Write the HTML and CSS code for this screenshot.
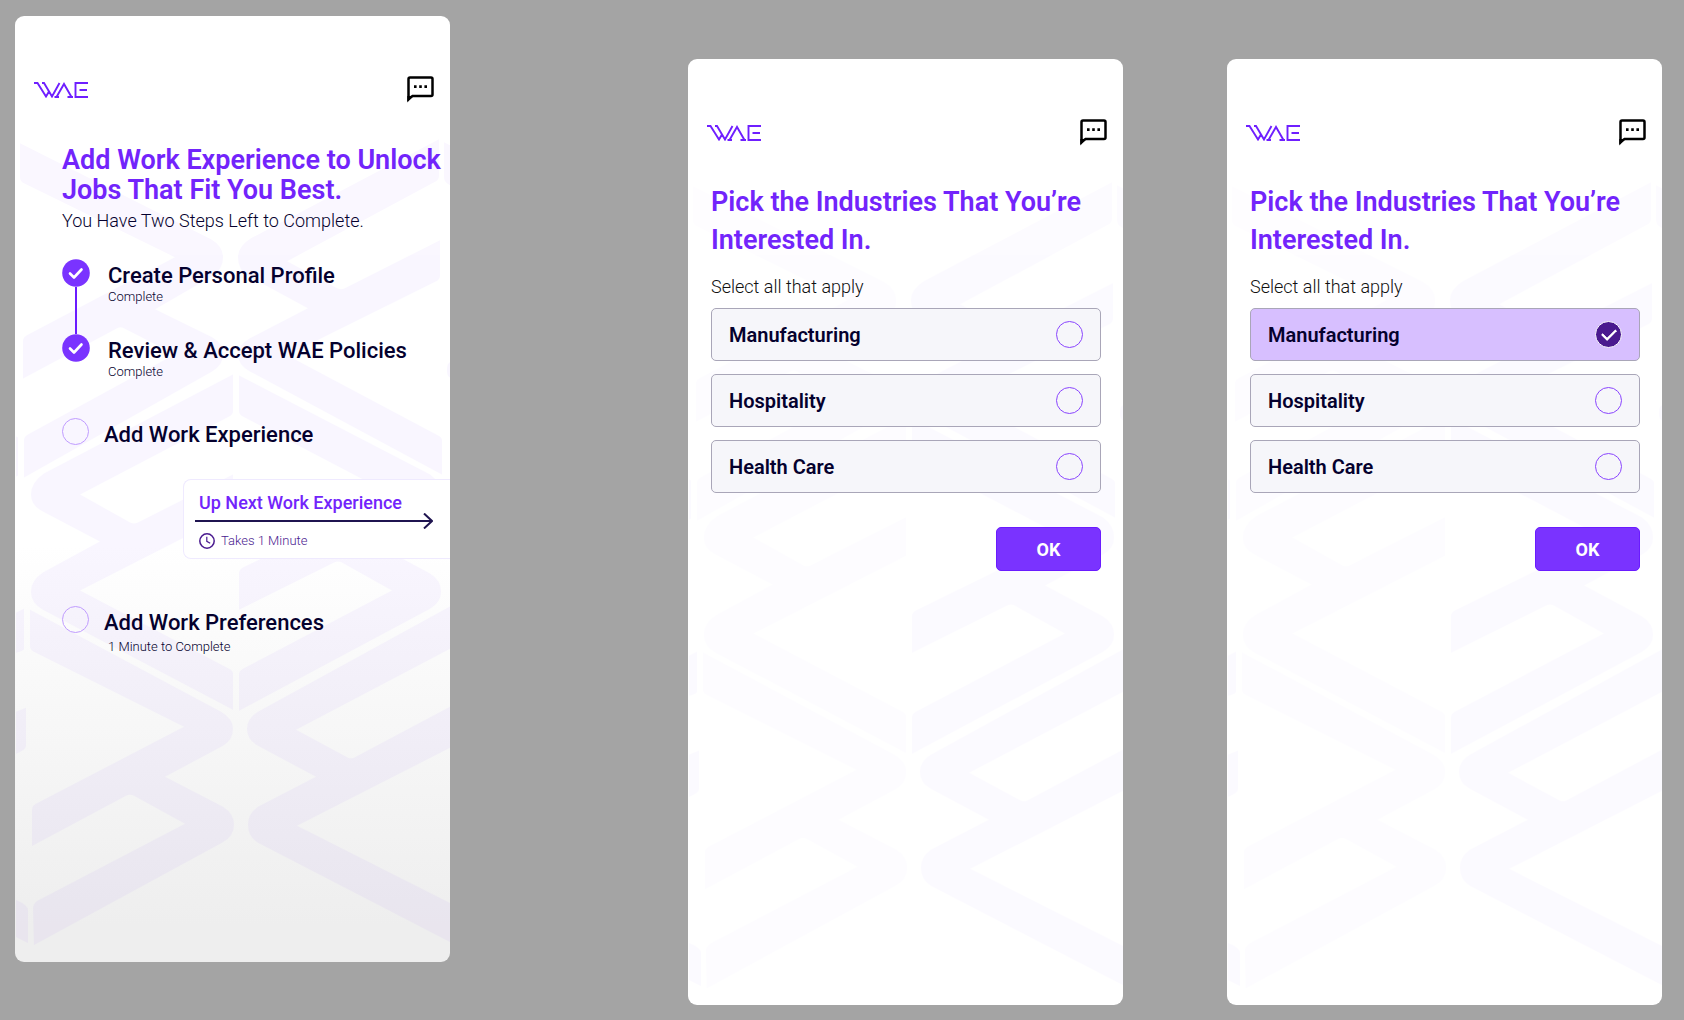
FILE: index.html
```html
<!DOCTYPE html>
<html lang="en">
<head>
    <meta charset="UTF-8">
    <meta name="viewport" content="width=device-width, initial-scale=1.0">
    <title>WAE Onboarding</title>
    <link rel="stylesheet" href="styles.css">
</head>
<body>

    <!-- Shared drawings -->
    <svg class="sprite" aria-hidden="true">
        <symbol id="logo" viewBox="0 0 54 16">
            <path d="M0 1H3.500L12 14.500L15 9.500M8 1H10L18 14.500L25.500 1M20.500 15H25M22.500 15L30 2L37.500 15M33.500 15H39M54 1H41.500V15H54M45.500 8H53" fill="none" stroke="#6f1fff" stroke-width="1.900"/>
        </symbol>
        <symbol id="chat" viewBox="0 0 27 27">
            <path d="M1.500 23V3Q1.500 1.500 3 1.500H24Q25.500 1.500 25.500 3V18.500Q25.500 20 24 20H5.500Z" fill="none" stroke="#000" stroke-width="2.500"/>
            <path d="M0.300 20V26.500L6.500 20Z" fill="#000"/>
            <path d="M7 9.300h2.600v2.600h-2.600zM12.200 9.300h2.600v2.600h-2.600zM17.400 9.300h2.600v2.600h-2.600z" fill="#000"/>
        </symbol>
        <symbol id="check" viewBox="0 0 28 28">
            <circle cx="14" cy="14" r="13.800" fill="#7a33ff"/>
            <path d="M8 14.500L12 18.500L19.500 10.500" fill="none" stroke="#fff" stroke-width="2.600" stroke-linecap="round" stroke-linejoin="round"/>
        </symbol>
        <symbol id="pattern" viewBox="15 16 435 945" preserveAspectRatio="none">
            <g class="pattern-left">
                <path d="M20 143L211 239Q223 246 223 257Q223 269 212 276L155 309L212 337Q223 343 223 354Q223 365 212 371L24 477V440Q24 436 28 434L175 354L124 328Q121 326 117 328L23 378V341Q23 337 27 335L175 257L24 183Q20 181 20 177Z"/>
                <path d="M233 374L44 473Q31 482 31 494Q31 505 43 511L100 541L43 572Q31 580 31 591Q31 603 43 609L233 709V673Q233 670 229 668L80 590L233 512V474L138 522Q134 524 130 522L80 494L229 416Q233 414 233 410Z"/>
                <path d="M30 609L221 711Q233 718 233 728Q233 739 223 745L165 776L223 806Q234 813 234 824Q234 836 222 842L34 944L33 908Q33 903 37 900L185 823L134 795Q130 793 126 795L32 845V809Q32 805 36 803L184 726L34 651Q30 649 30 645Z"/>
            </g>
            <g class="pattern-right">
                <path d="M439 139L251 238Q238 246 238 257Q238 270 249 276L308 308L250 338Q238 345 238 354Q238 365 250 371L442 474V440Q442 437 438 435L287 355L436 281Q440 279 440 275V240L345 288Q341 290 337 288L287 261L436 181Q439 179 439 175Z"/>
                <path d="M239 375V410Q239 414 243 416L392 494L243 567Q239 569 239 573V609L334 562Q338 560 342 562L392 590L243 668Q239 670 239 674V710L430 608Q441 602 441 591Q441 580 430 573L372 542L430 511Q441 505 441 494Q441 482 430 474Z"/>
                <path d="M450 606L258 711Q247 718 247 728Q247 739 258 745L316 776L258 806Q248 813 248 824Q248 836 258 842L450 941V902L297 825L450 747V706L354 757Q351 758 348 757L296 729L450 648Z"/>
                <path d="M444 142L450 145V185L447 183Q444 181 444 176ZM450 362Q447 363 447 370Q447 376 450 377ZM16 436L18 437V475L16 476ZM16 612L24 608V648Q24 650 16 652ZM16 711L26 707V745Q26 749 16 753ZM16 899Q28 904 28 909V942L16 936Z"/>
            </g>
        </symbol>
    </svg>

    <main class="screens">

        <!-- Progress screen -->
        <section class="screen screen-steps">
            <svg class="pattern" aria-hidden="true"><use href="#pattern"/></svg>
            <header class="top-bar">
                <svg class="logo" role="img" aria-label="WAE"><use href="#logo"/></svg>
                <button class="chat-btn" type="button" aria-label="Messages"><svg><use href="#chat"/></svg></button>
            </header>
            <div class="intro">
                <h1>Add Work Experience to Unlock Jobs That Fit You Best.</h1>
                <p>You Have Two Steps Left to Complete.</p>
            </div>
            <ol class="steps">
                <li class="step done">
                    <div class="rail">
                        <svg class="marker"><use href="#check"/></svg>
                        <span class="line"></span>
                    </div>
                    <div class="step-text">
                        <h2>Create Personal Profile</h2>
                        <p>Complete</p>
                    </div>
                </li>
                <li class="step done">
                    <div class="rail">
                        <svg class="marker"><use href="#check"/></svg>
                    </div>
                    <div class="step-text">
                        <h2>Review &amp; Accept WAE Policies</h2>
                        <p>Complete</p>
                    </div>
                </li>
                <li class="step todo">
                    <span class="ring"></span>
                    <div class="step-text">
                        <h2>Add Work Experience</h2>
                    </div>
                </li>
                <li class="next">
                    <a class="next-card" href="#work-experience">
                        <strong>Up Next Work Experience</strong>
                        <svg class="arrow" viewBox="0 0 238 16">
                            <path d="M0 8H237M229 0.500L237 8L229 15.500" fill="none" stroke="#1f1450" stroke-width="2"/>
                        </svg>
                        <span class="time">
                            <svg class="clock" viewBox="0 0 16 16">
                                <circle cx="8" cy="8" r="7.200" fill="none" stroke="#4a1a8f" stroke-width="1.500"/>
                                <path d="M7.800 3.800V8.300L11.200 10.300" fill="none" stroke="#4a1a8f" stroke-width="1.200"/>
                            </svg>
                            Takes 1 Minute
                        </span>
                    </a>
                </li>
                <li class="step todo">
                    <span class="ring"></span>
                    <div class="step-text">
                        <h2>Add Work Preferences</h2>
                        <p>1 Minute to Complete</p>
                    </div>
                </li>
            </ol>
        </section>

        <!-- Industries, nothing picked -->
        <section class="screen screen-pick">
            <svg class="pattern" aria-hidden="true"><use href="#pattern"/></svg>
            <header class="top-bar">
                <svg class="logo" role="img" aria-label="WAE"><use href="#logo"/></svg>
                <button class="chat-btn" type="button" aria-label="Messages"><svg><use href="#chat"/></svg></button>
            </header>
            <form class="picker">
                <h1>Pick the Industries That You’re Interested In.</h1>
                <p>Select all that apply</p>
                <div class="options">
                    <label class="option">Manufacturing <input type="checkbox" name="industry" value="manufacturing"></label>
                    <label class="option">Hospitality <input type="checkbox" name="industry" value="hospitality"></label>
                    <label class="option">Health Care <input type="checkbox" name="industry" value="health-care"></label>
                </div>
                <button class="ok-btn" type="button">OK</button>
            </form>
        </section>

        <!-- Industries, one picked -->
        <section class="screen screen-pick">
            <svg class="pattern" aria-hidden="true"><use href="#pattern"/></svg>
            <header class="top-bar">
                <svg class="logo" role="img" aria-label="WAE"><use href="#logo"/></svg>
                <button class="chat-btn" type="button" aria-label="Messages"><svg><use href="#chat"/></svg></button>
            </header>
            <form class="picker">
                <h1>Pick the Industries That You’re Interested In.</h1>
                <p>Select all that apply</p>
                <div class="options">
                    <label class="option">Manufacturing <input type="checkbox" name="industry" value="manufacturing" checked></label>
                    <label class="option">Hospitality <input type="checkbox" name="industry" value="hospitality"></label>
                    <label class="option">Health Care <input type="checkbox" name="industry" value="health-care"></label>
                </div>
                <button class="ok-btn" type="button">OK</button>
            </form>
        </section>

    </main>

</body>
</html>
```

FILE: styles.css
```css
/* Global Styles */
* {
    box-sizing: border-box;
}

body {
    font-family: Roboto, sans-serif;
    background-color: #a4a4a4;
    color: #05012e;
    margin: 0;
}

h1, h2, p, ol {
    margin: 0;
    padding: 0;
}

h1 {
    color: #7224fb;
    font-size: 27px;
    font-weight: 600;
}

.sprite {
    display: none;
}

/* Screens */
.screens {
    display: flex;
    align-items: flex-start;
    gap: 104px;
    padding: 16px 22px 15px 15px;
}

.screen {
    position: relative;
    flex: 1 1 0;
    min-width: 0;
    aspect-ratio: 435 / 946;
    background-color: #fff;
    border-radius: 9px;
    overflow: hidden;
}

.screen-steps {
    margin-right: 134px;
    background-image: linear-gradient(#fff 56%, #eee 96%);
}

.screen-pick {
    margin-top: 43px;
}

.pattern {
    position: absolute;
    inset: 0;
    width: 100%;
    height: 100%;
    fill: #7a33ff;
    opacity: 0.04;
}

.pattern-left {
    opacity: var(--left-fade, 1);
}

.screen-pick .pattern {
    --left-fade: 0.6;
    opacity: 0.02;
}

.top-bar {
    position: relative;
    display: flex;
    justify-content: space-between;
    align-items: center;
    padding: 60px 16px 0 19px;
}

.logo {
    width: 54px;
    height: 16px;
}

.chat-btn {
    width: 27px;
    height: 27px;
    padding: 0;
    border: none;
    background: none;
    cursor: pointer;
}

.chat-btn svg {
    display: block;
    width: 27px;
    height: 27px;
}

/* Progress screen */
.intro {
    position: relative;
    padding: 42px 0 0 47px;
}

.intro h1 {
    line-height: 30px;
}

.intro p {
    font-size: 18px;
    font-weight: 300;
    line-height: 32px;
}

.steps {
    position: relative;
    list-style: none;
    padding: 22px 0 0 47px;
}

.step {
    display: flex;
    gap: 18px;
}

.step.done {
    min-height: 75px;
}

.step.todo {
    gap: 15px;
}

.step.done + .todo {
    margin-top: 9px;
}

.rail {
    display: flex;
    flex-direction: column;
    align-items: center;
}

.marker {
    width: 28px;
    height: 28px;
}

.line {
    flex: 1;
    width: 2px;
    background-color: #6a1bff;
}

.ring {
    width: 27px;
    height: 27px;
    border: 1px solid #c09cff;
    border-radius: 50%;
}

.step-text {
    padding-top: 3px;
}

.step h2 {
    font-size: 22px;
    font-weight: 500;
    line-height: 28px;
}

.step p {
    font-size: 13px;
    font-weight: 300;
    line-height: 14px;
}

.todo p {
    padding: 3px 0 0 4px;
}

.next {
    padding: 30px 0 47px 121px;
}

.next-card {
    display: flex;
    flex-direction: column;
    padding: 12px 17px 6px 15px;
    background-color: #fff;
    border: 1px solid #efeaff;
    border-right: none;
    border-radius: 8px 0 0 8px;
    text-decoration: none;
}

.next-card strong {
    color: #7224fb;
    font-size: 18px;
    font-weight: 500;
    line-height: 21px;
}

.arrow {
    margin-left: -4px;
}

.time {
    display: flex;
    align-items: center;
    gap: 6px;
    color: #4a1a8f;
    font-size: 13px;
    font-weight: 300;
    line-height: 23px;
}

.clock {
    width: 16px;
    height: 16px;
}

/* Industry picker */
.picker {
    position: relative;
    display: flex;
    flex-direction: column;
    padding: 37px 22px 0 23px;
}

.picker h1 {
    line-height: 38px;
}

.picker p {
    margin: 16px 0 9px;
    color: #111;
    font-size: 18px;
    font-weight: 300;
    line-height: 24px;
}

.options {
    display: flex;
    flex-direction: column;
    gap: 13px;
}

.option {
    display: flex;
    justify-content: space-between;
    align-items: center;
    height: 53px;
    padding: 0 17px;
    background-color: #f6f6fa;
    border: 1px solid #a9a6b8;
    border-radius: 5px;
    font-size: 20px;
    font-weight: 600;
    cursor: pointer;
}

.option:has(:checked) {
    background-color: #d7bfff;
}

.option input {
    appearance: none;
    display: flex;
    justify-content: center;
    align-items: center;
    width: 27px;
    height: 27px;
    margin: 0;
    border: 1px solid #8a45ff;
    border-radius: 50%;
    cursor: pointer;
}

.option input:checked {
    background-color: #4a1a8f;
    border: 1px solid #fff;
}

.option input:checked::after {
    content: "";
    width: 13px;
    height: 7px;
    border: solid #fff;
    border-width: 0 0 3px 3px;
    border-radius: 1px;
    transform: translateY(-2px) rotate(-45deg) scale(0.9);
}

.ok-btn {
    align-self: flex-end;
    width: 105px;
    height: 44px;
    margin-top: 34px;
    background-color: #7a33ff;
    color: #fff;
    border: 1px solid #6a1bff;
    border-radius: 5px;
    font-family: inherit;
    font-size: 18px;
    font-weight: 700;
    cursor: pointer;
}

.ok-btn:hover {
    background-color: #6a1bff;
}
```
